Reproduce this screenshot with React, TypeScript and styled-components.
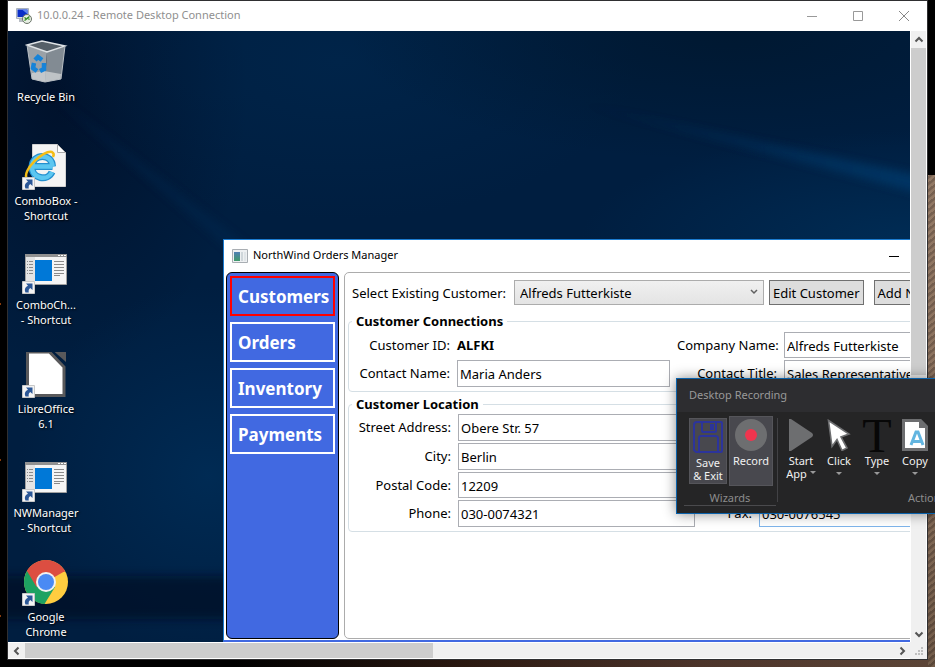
import React from "react";
import type { ReactNode } from "react";
import styled, { createGlobalStyle } from "styled-components";

const GlobalStyle = createGlobalStyle`
  *, *::before, *::after { box-sizing: border-box; }
  body { margin: 0; background: #000; }
  body, button, input, select {
    font-family: "Noto Sans", "Open Sans", sans-serif;
    font-size: 13px;
  }
  button { padding: 0; margin: 0; border: 0; background: none; color: inherit; }
  svg { display: block; }
`;

/* ---------- outer screen and remote window ---------- */

const Screen = styled.div`
  position: relative;
  display: flex;
  min-height: 100vh;
  padding: 0 7px 7px;
  overflow: hidden;
  background:
    linear-gradient(#8a3c0c, #8a3c0c) 0 303px / 1px 2px no-repeat,
    linear-gradient(#8a3c0c, #8a3c0c) 0 459px / 1px 2px no-repeat,
    linear-gradient(#8a3c0c, #8a3c0c) 0 615px / 1px 2px no-repeat,
    linear-gradient(#000, #000) right top / 7px 175px no-repeat,
    repeating-linear-gradient(140deg, #5c493c66 0 2px, #a78b7355 3px 5px) right top / 7px 100% no-repeat,
    linear-gradient(#927a67, #7d6554 60%, #584536) right top / 7px 100% no-repeat,
    linear-gradient(90deg, #000 25%, #2b1911 50%, #4c342a 75%, #5c4537) left bottom / 100% 7px no-repeat,
    #000;
`;

const RemoteWindow = styled.section`
  display: flex;
  flex: 1;
  flex-direction: column;
  min-width: 0;
  border: 1px solid #2f2f31;
  background: #fff;
`;

const TitleBar = styled.header<{ $height: number; $color: string }>`
  display: flex;
  flex: none;
  align-items: center;
  height: ${(p) => p.$height}px;
  padding-left: 8px;
  background: #fff;
  color: ${(p) => p.$color};
`;

const WindowTitle = styled.h1`
  flex: 1;
  margin: 0 0 0 5px;
  padding-bottom: 2px;
  font-size: 11px;
  font-weight: 400;
  line-height: 16px;
`;

const WindowButton = styled.button`
  display: grid;
  place-items: center;
  width: 46px;
  height: 30px;
`;

const Viewport = styled.div`
  display: grid;
  flex: 1;
  grid-template: minmax(0, 1fr) 17px / minmax(0, 1fr) 17px;
`;

const Desktop = styled.main`
  position: relative;
  overflow: hidden;
  background: #001c3b;
`;

const Wallpaper = styled.svg`
  position: absolute;
  inset: 0;
  width: 100%;
  height: 100%;
`;

const VerticalScroll = styled.div`
  display: flex;
  flex-direction: column;
  border: solid #fff;
  border-width: 0 1px;
  background: #f0f0f0;
`;

const HorizontalScroll = styled.div`
  display: flex;
  border: solid #fff;
  border-width: 1px 0;
  background: #f0f0f0;
`;

const ScrollButton = styled.button`
  display: grid;
  flex: 0 0 17px;
  place-items: center;
`;

const ScrollPart = styled.div<{ $share: number; $thumb?: boolean }>`
  flex: ${(p) => p.$share} 1 0;
  background: ${(p) => (p.$thumb ? "#cdcdcd" : "transparent")};
`;

const Corner = styled.div`
  display: grid;
  place-items: center;
  background: #f0f0f0;
`;

/* ---------- desktop shortcuts ---------- */

const Shortcuts = styled.nav`
  position: relative;
  display: flex;
  flex-direction: column;
  width: 76px;
  padding-top: 9px;
`;

const ShortcutLink = styled.a`
  display: block;
  height: 104px;
  color: #fff;
  font-size: 11px;
  line-height: 15px;
  text-align: center;
  text-decoration: none;
  text-shadow: 1px 1px 2px #000;

  &:last-child {
    height: auto;
  }
`;

const ShortcutIcon = styled.svg`
  width: 48px;
  height: 49px;
  margin: 0 auto 0 14px;
`;

const Line = styled.span`
  display: block;
`;

/* ---------- orders manager ---------- */

const AppWindow = styled.section`
  position: absolute;
  top: 208px;
  right: -100px;
  bottom: 0;
  left: 215px;
  display: flex;
  flex-direction: column;
  border: 1px solid #1c7cd0;
  border-bottom: 2px solid #4169e1;
  background: #fff;
`;

const AppBody = styled.div`
  display: flex;
  flex: 1;
  gap: 5px;
  padding: 0 2px 1px;
`;

const Sidebar = styled.nav`
  display: flex;
  flex: none;
  flex-direction: column;
  gap: 6px;
  width: 113px;
  padding: 3px;
  border: 1px solid #000;
  border-radius: 6px;
  background: #4169e1;
`;

const NavButton = styled.button<{ $active?: boolean }>`
  height: 40px;
  padding-left: 6px;
  border: 2px solid ${(p) => (p.$active ? "#f00" : "#fff")};
  color: #fff;
  font-size: 17px;
  font-weight: 700;
  text-align: left;
`;

const Panel = styled.div`
  flex: 1;
  padding: 7px 3px;
  border: 1px solid #acacac;
  border-radius: 5px;
`;

const PickerRow = styled.div`
  display: flex;
  align-items: center;
  height: 25px;
  margin-bottom: 8px;
  padding-left: 4px;
`;

const PickerLabel = styled.label`
  flex: 0 0 162px;
  white-space: nowrap;
`;

const SelectBox = styled.div`
  position: relative;
  flex: 0 0 250px;
  margin-right: 5px;
`;

const Select = styled.select`
  display: block;
  width: 100%;
  height: 25px;
  padding: 0 5px;
  appearance: none;
  border: 1px solid #acacac;
  border-radius: 0;
  background: linear-gradient(#f0f0f0, #e4e4e4);
  color: #000;
`;

const SelectArrow = styled.svg`
  position: absolute;
  top: 9px;
  right: 6px;
  pointer-events: none;
`;

const PushButton = styled.button`
  flex: none;
  height: 25px;
  margin-right: 10px;
  padding: 0 3px;
  border: 1px solid #707070;
  background: #ddd;
  white-space: nowrap;
`;

const Group = styled.fieldset<{ $columns: string; $top: number }>`
  display: grid;
  grid-template-columns: ${(p) => p.$columns};
  gap: 2px 7px;
  align-items: center;
  min-width: 0;
  margin: 0 0 4px;
  padding: ${(p) => p.$top}px 3px 4px;
  border: 1px solid #d5dfe5;
  border-radius: 4px;
`;

const Legend = styled.legend`
  padding: 0 4px;
  font-weight: 700;
  line-height: 16px;
`;

const FieldLabel = styled.label`
  padding-bottom: 1px;
  line-height: 20px;
  text-align: right;
  white-space: nowrap;
`;

const CustomerId = styled.output`
  font-weight: 700;
`;

const TextBox = styled.input<{ $wide?: boolean; $focused?: boolean; $height?: number }>`
  grid-column: ${(p) => (p.$wide ? "span 3" : "auto")};
  width: 100%;
  min-width: 0;
  height: ${(p) => p.$height || 27}px;
  padding: 1px 2px 0;
  border: 1px solid ${(p) => (p.$focused ? "#7eb4ea" : "#abadb3")};
  border-radius: 0;
  outline: 0;
  color: #000;
`;

/* ---------- recorder ---------- */

const Recorder = styled.aside`
  position: absolute;
  top: 378px;
  right: 0;
  left: 676px;
  overflow: hidden;
  border: 1px solid #0a62ab;
  border-right: 0;
  background: #252526;
  box-shadow: 0 0 12px #0007;
  color: #f1f1f1;
  font-size: 11px;
`;

const RecorderTitle = styled.h2`
  margin: 0;
  padding: 0 12px 2px;
  background: #2d2d30;
  color: #999;
  font-size: 11px;
  font-weight: 400;
  line-height: 31px;
`;

const Ribbon = styled.div`
  display: flex;
  padding-bottom: 7px;
`;

const WizardGroup = styled.section`
  flex: 0 0 92px;
  margin-left: 7px;
  border-bottom: 1px solid #4a4a4d;
`;

const ActionGroup = styled.section`
  flex: none;
`;

const Separator = styled.div`
  flex: 0 0 1px;
  margin: 6px 4px 4px 1px;
  background: #424245;
`;

const Tools = styled.div<{ $start?: number }>`
  display: flex;
  gap: ${(p) => (p.$start ? 2 : 0)}px;
  align-items: center;
  height: 78px;
  padding-left: ${(p) => p.$start || 0}px;
`;

const ToolButton = styled.button<{ $width: number; $height: number; $raised?: boolean }>`
  display: flex;
  flex-direction: column;
  align-items: center;
  width: ${(p) => p.$width}px;
  height: ${(p) => p.$height}px;
  padding-top: 2px;
  border: 1px solid ${(p) => (p.$raised ? "#55555a" : "transparent")};
  background: ${(p) => (p.$raised ? "#48484e" : "transparent")};
  font-size: 11px;
  line-height: 13px;
  white-space: nowrap;
`;

const ToolText = styled.span`
  margin-top: 3px;
`;

const TypeGlyph = styled.span`
  height: 32px;
  color: #070707;
  font-family: "Liberation Serif", serif;
  font-size: 48px;
  line-height: 34px;
`;

const Caret = styled.svg<{ $inline?: boolean }>`
  display: ${(p) => (p.$inline ? "inline-block" : "block")};
  margin: ${(p) => (p.$inline ? "0 0 3px 3px" : "5px 0 0")};
`;

const GroupName = styled.div`
  color: #8c8c8c;
  line-height: 15px;
  text-align: center;
`;

const ActionName = styled(GroupName)`
  padding-left: 126px;
  text-align: left;
`;

/* ---------- drawings ---------- */

const chevrons = {
  up: "M1.500 6.500 5 3 8.500 6.500",
  down: "M1.500 3.500 5 7 8.500 3.500",
  left: "M6.500 1.500 3 5 6.500 8.500",
  right: "M3.500 1.500 7 5 3.500 8.500",
};

function Chevron({ dir }: { dir: keyof typeof chevrons }) {
  return (
    <svg width="10" height="10" viewBox="0 0 10 10" fill="none" stroke="#555" strokeWidth="2">
      <path d={chevrons[dir]} />
    </svg>
  );
}

function DownCaret({ inline }: { inline?: boolean }) {
  return (
    <Caret $inline={inline} width="6" height="4" viewBox="0 0 6 4" fill="#999">
      <path d="M0 0h6L3 3z" />
    </Caret>
  );
}

const glows = [
  { id: "corner-shade", cx: 50, cy: 60, rx: 190, ry: 280, color: "#000d24", opacity: 0.75 },
  { id: "top-glow", cx: 330, cy: 30, rx: 300, ry: 160, color: "#002a52", opacity: 0.5 },
  { id: "top-shade", cx: 720, cy: 0, rx: 380, ry: 130, color: "#00162b", opacity: 0.7 },
  { id: "side-glow", cx: 200, cy: 445, rx: 190, ry: 190, color: "#00305c", opacity: 0.7 },
  { id: "right-glow", cx: 902, cy: 210, rx: 330, ry: 110, color: "#003562", opacity: 0.6 },
];

function Backdrop() {
  return (
    <Wallpaper viewBox="0 0 902 611" preserveAspectRatio="none" aria-hidden="true">
      <defs>
        {glows.map((g) => (
          <radialGradient key={g.id} id={g.id}>
            <stop offset="0" stopColor={g.color} stopOpacity={g.opacity} />
            <stop offset="0.5" stopColor={g.color} stopOpacity={g.opacity / 2} />
            <stop offset="1" stopColor={g.color} stopOpacity="0" />
          </radialGradient>
        ))}
        <filter id="edge" x="-20%" y="-50%" width="140%" height="200%">
          <feGaussianBlur stdDeviation="4" />
        </filter>
        <linearGradient id="beam" x1="0" x2="1">
          <stop offset="0" stopColor="#003a6b" stopOpacity="0" />
          <stop offset="1" stopColor="#003d70" />
        </linearGradient>
      </defs>
      <rect width="902" height="611" fill="#001e40" />
      {glows.map((g) => (
        <ellipse key={g.id} cx={g.cx} cy={g.cy} rx={g.rx} ry={g.ry} fill={`url(#${g.id})`} />
      ))}
      <path d="M560 70 910 144V162z" fill="url(#beam)" opacity=".7" filter="url(#edge)" />
      <path d="M40 60 240 215V235z" fill="#002a52" opacity=".4" filter="url(#edge)" />
      <path d="M-20 545H250V588H-20z" fill="#000d24" opacity=".65" filter="url(#edge)" />
    </Wallpaper>
  );
}

const ArrowBadge = () => (
  <g>
    <path d="M0.5 36.5h12v12h-12z" fill="#f3f3f3" stroke="#c8c8c8" />
    <path d="M4 38.5h6.5V45L8.3 43C6.500 44.500 6.500 45.500 6.800 47.500H3.500C2 44 3.500 42 6 40.700z" fill="#2b5797" />
  </g>
);

const RecycleArt = () => (
  <g>
    <path d="M5 5 25 12 23 42 10 39z" fill="#9aa1a7" />
    <path d="M25 12 43 6 39 39 23 42z" fill="#828b93" />
    <path d="M5 5 20 1 43 6 25 12z" fill="#555f68" stroke="#dfe3e6" strokeWidth="1.400" />
    <path d="M10 33 22 31 39 34 38.500 39 23 42 10 39z" fill="#d2d5d7" opacity=".75" />
    <path d="M5 5 10 39 23 42 39 39 43 6" fill="none" stroke="#b9bfc4" />
    <g fill="none" stroke="#1683d8" strokeWidth="4.500">
      <path d="M13 20 16 17 20 20" />
      <path d="M22 23 22 29 18 31" />
      <path d="M12 23 11 28 15 31" />
    </g>
  </g>
);

const WindowArt = () => (
  <g>
    <g transform="translate(0 -1)">
      <path d="M3.500 10.500h41v30h-41z" fill="#f5f5f5" stroke="#a0a0a0" />
      <path d="M3 10h42v3H3z" fill="#919191" />
      <path d="M36 11h2v1h-2zm3 0h2v1h-2zm3 0h2v1h-2z" fill="#fff" />
      <path d="M4 13h9v27H4z" fill="#e4e4e4" />
      <path d="M13 16h17v21H13z" fill="#0078d7" />
      <path
        d="M5 17.500h1m1 0h4M5 20.500h1m1 0h4M5 23.500h1m1 0h4M5 26.500h1m1 0h4M5 29.500h1m1 0h4M32 17.500h10M32 20.500h10M32 23.500h10M32 26.500h10M32 29.500h10M32 31.500h6"
        stroke="#8a8a8a"
      />
    </g>
    <ArrowBadge />
  </g>
);

const ExplorerArt = () => (
  <g>
    <path d="M10.500 3.500h25l8 8v34h-33z" fill="#f4f4f4" stroke="#d2d2d2" />
    <path d="M35.500 3.500v8h8z" fill="#fff" stroke="#aaa" />
    <path
      d="M30.500 25.500H12M30.500 25.500C30 12 11 12 10 25.500 9.500 38 26 40.500 30 31"
      fill="none"
      stroke="#2490cf"
      strokeWidth="7"
    />
    <path
      d="M30.500 25.500H12M30.500 25.500C30 12 11 12 10 25.500 9.500 38 26 40.500 30 31"
      fill="none"
      stroke="#5cc7f1"
      strokeWidth="4.500"
    />
    <path d="M5 38C-1 30 22 8 30 11c2 1 2 3 1 5" fill="none" stroke="#f4bd16" strokeWidth="2.500" />
    <ArrowBadge />
  </g>
);

const OfficeArt = () => (
  <g>
    <path d="M5.500 3h22L42 18v28.500H5.500z" fill="#fff" stroke="#59595b" strokeWidth="3" />
    <path d="M31 1.500h11.500q1.500 0 1.500 1.500V13z" fill="#59595b" />
    <ArrowBadge />
  </g>
);

const ChromeArt = () => (
  <g>
    <circle cx="24" cy="25" r="22" fill="#ffcd40" />
    <path d="M24 25 5 14A22 22 0 0 1 43 14z" fill="#dc4e41" />
    <path d="M24 25 5 14A22 22 0 0 0 22.500 47L33 30z" fill="#1da261" />
    <path d="M5 14A22 22 0 0 1 43 15H24L14.500 30z" fill="#dc4e41" />
    <circle cx="24" cy="25" r="10" fill="#f1f1f1" />
    <circle cx="24" cy="25" r="8" fill="#4a8af4" />
    <ArrowBadge />
  </g>
);

const RemoteIcon = () => (
  <svg width="16" height="16" viewBox="0 0 16 16">
    <path d="M.5.500h12v10H.5z" fill="#d7dce3" stroke="#aab2bd" />
    <path d="M1.500 1.500h10v7.500h-10z" fill="#0a2fc8" />
    <path d="M6 1.500h5.500V6z" fill="#5e85f0" />
    <path d="M3 11h6v3H3z" fill="#b9bec5" />
    <circle cx="11" cy="11" r="4.500" fill="#e8efe4" stroke="#6b7468" />
    <path d="m8.500 9.500 2 1.500-2 1.500m5-4-2 1.500 2 1.500" fill="none" stroke="#2c8a1b" strokeWidth="1.300" />
  </svg>
);

const OrdersIcon = () => (
  <svg width="16" height="14" viewBox="0 0 16 14">
    <defs>
      <linearGradient id="tile" x1="0" y1="0" x2="0" y2="1">
        <stop offset="0" stopColor="#4f7fb4" />
        <stop offset="1" stopColor="#3f9a6a" />
      </linearGradient>
    </defs>
    <path d="M.5.500h15v13H.5z" fill="#eef0f2" stroke="#a9aeb3" />
    <path d="M2 3h6v9H2z" fill="url(#tile)" />
    <path d="M9 3h2v9H9z" fill="#cfd6da" />
    <path d="M12 3h2v9h-2z" fill="#dfe4e7" />
  </svg>
);

const SaveArt = () => (
  <svg width="30" height="32" viewBox="0 0 30 32" fill="none" stroke="#2c349b" strokeWidth="2">
    <path d="M4 1h24q1 0 1 1v28q0 1-1 1H3L1 29V4q0-3 3-3z" />
    <path d="M9 1v9q0 1 1 1h12q1 0 1-1V1" />
    <path d="M17 3h4v6h-4z" fill="#2c349b" stroke="none" />
    <path d="M6 31V17q0-2 2-2h14q3 0 3 2v14" />
  </svg>
);

const RecordArt = () => (
  <svg width="32" height="32" viewBox="0 0 32 32">
    <circle cx="16" cy="16" r="16" fill="#6d6e70" />
    <circle cx="16" cy="16" r="6" fill="#f0354e" />
  </svg>
);

const PlayArt = () => (
  <svg width="24" height="32" viewBox="0 0 24 32">
    <path d="M0 0h2l21 14q2 2 0 4L2 32H0z" fill="#6d6e70" />
  </svg>
);

const CursorArt = () => (
  <svg width="24" height="32" viewBox="0 0 24 32">
    <path d="M1.500 1.500 22 15l-8 3 6 11-5 2.500-5-11-5 7z" fill="#fff" stroke="#6d6e70" strokeWidth="1.600" />
  </svg>
);

const CopyArt = () => (
  <svg width="26" height="32" viewBox="0 0 26 32">
    <path d="M1.500 1.500h17l6 6v23h-23z" fill="#fff" stroke="#6d6e70" strokeWidth="3" />
    <path d="M17 0v9h9z" fill="#6d6e70" />
    <path d="M9 26 14 13h2l5 13M11 22.500h8" fill="none" stroke="#62b5e0" strokeWidth="3" />
  </svg>
);

/* ---------- page ---------- */

const shortcuts: { art: () => ReactNode; lines: string[]; top: number }[] = [
  { art: RecycleArt, lines: ["Recycle Bin"], top: 0 },
  { art: ExplorerArt, lines: ["ComboBox -", "Shortcut"], top: 3 },
  { art: WindowArt, lines: ["ComboCh...", "- Shortcut"], top: 3 },
  { art: OfficeArt, lines: ["LibreOffice", "6.1"], top: 3 },
  { art: WindowArt, lines: ["NWManager", "- Shortcut"], top: 3 },
  { art: ChromeArt, lines: ["Google", "Chrome"], top: 3 },
];

const sections = ["Customers", "Orders", "Inventory", "Payments"];

interface FieldProps {
  id: string;
  label: string;
  value: string;
  wide?: boolean;
  focused?: boolean;
  height?: number;
}

function Field({ id, label, value, wide, focused, height }: FieldProps) {
  return (
    <>
      <FieldLabel htmlFor={id}>{label}</FieldLabel>
      <TextBox id={id} defaultValue={value} $wide={wide} $focused={focused} $height={height} />
    </>
  );
}

function OrdersManager() {
  return (
    <AppWindow aria-label="NorthWind Orders Manager">
      <TitleBar $height={32} $color="#000">
        <OrdersIcon />
        <WindowTitle as="h2">NorthWind Orders Manager</WindowTitle>
        <WindowButton aria-label="Minimize">
          <svg width="10" height="1" viewBox="0 0 10 1"><path d="M0 0h10v1H0z" /></svg>
        </WindowButton>
        <WindowButton aria-label="Maximize">
          <svg width="10" height="10" fill="none" stroke="#000"><path d="M.5.500h9v9h-9z" /></svg>
        </WindowButton>
        <WindowButton aria-label="Close">
          <svg width="10" height="10" stroke="#000"><path d="m0 0 10 10M10 0 0 10" /></svg>
        </WindowButton>
      </TitleBar>
      <AppBody>
        <Sidebar>
          {sections.map((name, i) => (
            <NavButton key={name} $active={i === 0}>{name}</NavButton>
          ))}
        </Sidebar>
        <Panel>
          <PickerRow>
            <PickerLabel htmlFor="customer">Select Existing Customer:</PickerLabel>
            <SelectBox>
              <Select id="customer" defaultValue="ALFKI">
                <option value="ALFKI">Alfreds Futterkiste</option>
              </Select>
              <SelectArrow width="8" height="6" viewBox="0 0 8 6" fill="none" stroke="#606060" strokeWidth="1.500">
                <path d="m1 1 3 3 3-3" />
              </SelectArrow>
            </SelectBox>
            <PushButton>Edit Customer</PushButton>
            <PushButton>Add New Customer</PushButton>
          </PickerRow>
          <Group $columns="98px 213px 100px minmax(0, 1fr)" $top={3}>
            <Legend>Customer Connections</Legend>
            <FieldLabel htmlFor="customer-id">Customer ID:</FieldLabel>
            <CustomerId id="customer-id">ALFKI</CustomerId>
            <Field id="company" label="Company Name:" value="Alfreds Futterkiste" height={26} />
            <Field id="contact" label="Contact Name:" value="Maria Anders" />
            <Field id="contact-title" label="Contact Title:" value="Sales Representative" />
          </Group>
          <Group $columns="99px 237px 50px minmax(0, 1fr)" $top={2}>
            <Legend>Customer Location</Legend>
            <Field id="street" label="Street Address:" value="Obere Str. 57" wide />
            <Field id="city" label="City:" value="Berlin" wide />
            <Field id="postal" label="Postal Code:" value="12209" wide height={26} />
            <Field id="phone" label="Phone:" value="030-0074321" />
            <Field id="fax" label="Fax:" value="030-0076545" focused />
          </Group>
        </Panel>
      </AppBody>
    </AppWindow>
  );
}

function DesktopRecorder() {
  return (
    <Recorder aria-label="Desktop Recording">
      <RecorderTitle>Desktop Recording</RecorderTitle>
      <Ribbon>
        <WizardGroup>
          <Tools $start={5}>
            <ToolButton $width={38} $height={66} $raised>
              <SaveArt />
              <ToolText>Save<br />&amp; Exit</ToolText>
            </ToolButton>
            <ToolButton $width={44} $height={70} $raised>
              <RecordArt />
              <ToolText>Record</ToolText>
            </ToolButton>
          </Tools>
          <GroupName>Wizards</GroupName>
        </WizardGroup>
        <Separator />
        <ActionGroup>
          <Tools>
            <ToolButton $width={38} $height={70}>
              <PlayArt />
              <ToolText>Start<br />App<DownCaret inline /></ToolText>
            </ToolButton>
            <ToolButton $width={38} $height={70}>
              <CursorArt />
              <ToolText>Click</ToolText>
              <DownCaret />
            </ToolButton>
            <ToolButton $width={38} $height={70}>
              <TypeGlyph aria-hidden="true">T</TypeGlyph>
              <ToolText>Type</ToolText>
              <DownCaret />
            </ToolButton>
            <ToolButton $width={38} $height={70}>
              <CopyArt />
              <ToolText>Copy</ToolText>
              <DownCaret />
            </ToolButton>
          </Tools>
          <ActionName>Actions</ActionName>
        </ActionGroup>
      </Ribbon>
    </Recorder>
  );
}

export default function App() {
  return (
    <>
      <GlobalStyle />
      <Screen>
        <RemoteWindow>
          <TitleBar $height={30} $color="#8f8f8f">
            <RemoteIcon />
            <WindowTitle>10.0.0.24 - Remote Desktop Connection</WindowTitle>
            <WindowButton aria-label="Minimize">
              <svg width="10" height="1"><path d="M0 0h10v1H0z" fill="#999" /></svg>
            </WindowButton>
            <WindowButton aria-label="Maximize">
              <svg width="10" height="10" fill="none" stroke="#999"><path d="M.5.500h9v9h-9z" /></svg>
            </WindowButton>
            <WindowButton aria-label="Close">
              <svg width="10" height="10" stroke="#888"><path d="m0 0 10 10M10 0 0 10" /></svg>
            </WindowButton>
          </TitleBar>
          <Viewport>
            <Desktop>
              <Backdrop />
              <Shortcuts>
                {shortcuts.map(({ art: Art, lines, top }) => (
                  <ShortcutLink key={lines.join(" ")} href="#">
                    <ShortcutIcon viewBox={`0 ${top} 48 49`}><Art /></ShortcutIcon>
                    {lines.map((line) => <Line key={line}>{line}</Line>)}
                  </ShortcutLink>
                ))}
              </Shortcuts>
              <OrdersManager />
            </Desktop>
            <VerticalScroll>
              <ScrollButton aria-label="Scroll up"><Chevron dir="up" /></ScrollButton>
              <ScrollPart $share={327} $thumb />
              <ScrollPart $share={250} />
              <ScrollButton aria-label="Scroll down"><Chevron dir="down" /></ScrollButton>
            </VerticalScroll>
            <HorizontalScroll>
              <ScrollButton aria-label="Scroll left"><Chevron dir="left" /></ScrollButton>
              <ScrollPart $share={408} $thumb />
              <ScrollPart $share={460} />
              <ScrollButton aria-label="Scroll right"><Chevron dir="right" /></ScrollButton>
            </HorizontalScroll>
            <Corner>
              <svg width="8" height="8" viewBox="0 0 8 8" fill="#bfbfbf">
                <path d="M6 0h2v2H6zM3 3h2v2H3zm3 0h2v2H6zM0 6h2v2H0zm3 0h2v2H3zm3 0h2v2H6z" />
              </svg>
            </Corner>
          </Viewport>
        </RemoteWindow>
        <DesktopRecorder />
      </Screen>
    </>
  );
}
